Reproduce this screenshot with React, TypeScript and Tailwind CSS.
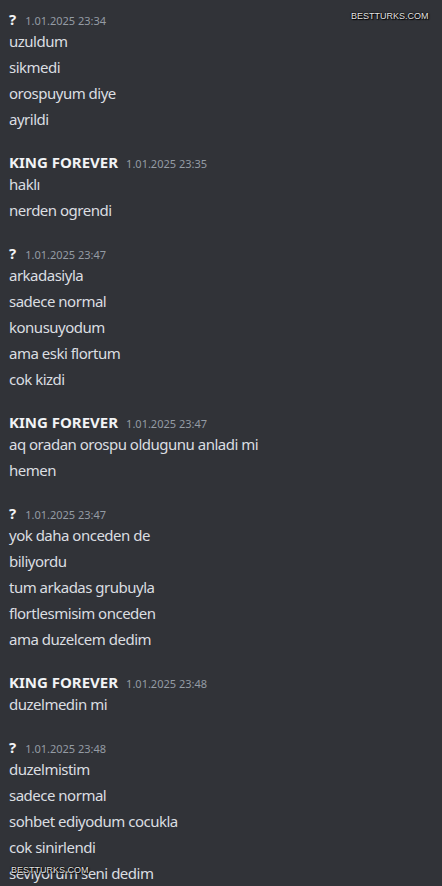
import React from 'react';

type Group = {
  author: string;
  time: string;
  lines: string[];
};

const GROUPS: Group[] = [
  { author: '?', time: '1.01.2025 23:34', lines: ['uzuldum', 'sikmedi', 'orospuyum diye', 'ayrildi'] },
  { author: 'KING FOREVER', time: '1.01.2025 23:35', lines: ['haklı', 'nerden ogrendi'] },
  {
    author: '?',
    time: '1.01.2025 23:47',
    lines: ['arkadasiyla', 'sadece normal', 'konusuyodum', 'ama eski flortum', 'cok kizdi'],
  },
  { author: 'KING FOREVER', time: '1.01.2025 23:47', lines: ['aq oradan orospu oldugunu anladi mi', 'hemen'] },
  {
    author: '?',
    time: '1.01.2025 23:47',
    lines: ['yok daha onceden de', 'biliyordu', 'tum arkadas grubuyla', 'flortlesmisim onceden', 'ama duzelcem dedim'],
  },
  { author: 'KING FOREVER', time: '1.01.2025 23:48', lines: ['duzelmedin mi'] },
  {
    author: '?',
    time: '1.01.2025 23:48',
    lines: ['duzelmistim', 'sadece normal', 'sohbet ediyodum cocukla', 'cok sinirlendi', 'seviyorum seni dedim'],
  },
];

function Watermark({ className }: { className: string }) {
  return (
    <span
      className={`absolute text-[9px] leading-none text-[#e4e4e4] font-['Liberation_Sans',Arial,sans-serif] [text-shadow:0_0_2px_#000,0_0_1px_#000,1px_1px_1px_#000] ${className}`}
    >
      BESTTURKS.COM
    </span>
  );
}

function MessageGroup({ group }: { group: Group }) {
  return (
    <div className="flex flex-col">
      <div className="flex items-baseline h-[22px] leading-[22px]">
        <span className="text-[15px] font-bold text-[#f2f3f5]">{group.author}</span>
        <span className={`text-[11px] text-[#949ba4] ${group.author === '?' ? 'ml-[9px]' : 'ml-[8px]'}`}>
          {group.time}
        </span>
      </div>
      <div className="flex flex-col gap-[4px]">
        {group.lines.map((line, i) => (
          <div key={i} className="text-[15px] leading-[22px] text-[#dbdee1] tracking-[-0.5px] whitespace-nowrap">
            {line}
          </div>
        ))}
      </div>
    </div>
  );
}

export default function App() {
  return (
    <div className="relative w-[442px] h-[886px] overflow-hidden bg-[#313338] font-['Noto_Sans',sans-serif]">
      <div className="flex flex-col gap-[21px] pl-[9px] pt-[8px]">
        {GROUPS.map((g, i) => (
          <MessageGroup key={i} group={g} />
        ))}
      </div>
      <Watermark className="top-[12px] left-[351px]" />
      <Watermark className="top-[866px] left-[11px]" />
    </div>
  );
}
